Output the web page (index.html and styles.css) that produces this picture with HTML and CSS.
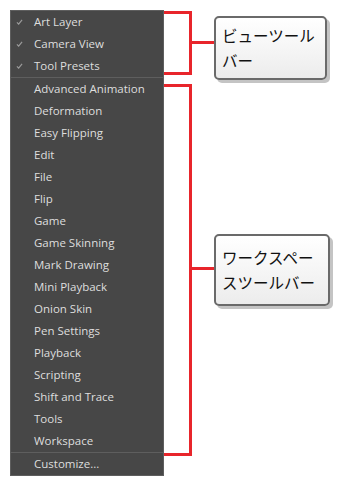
FILE: index.html
```html
<!DOCTYPE html>
<html lang="ja">
<head>
  <meta charset="UTF-8" />
  <title>Toolbars</title>
  <link rel="stylesheet" href="styles.css">
</head>
<body>
  <div class="figure">
    <div class="menu">
      <div class="item checked"><svg class="tick" viewBox="0 0 8 7"><path d="M1 4 L3 6 L7 1" /></svg>Art Layer</div>
      <div class="item checked"><svg class="tick" viewBox="0 0 8 7"><path d="M1 4 L3 6 L7 1" /></svg>Camera View</div>
      <div class="item checked"><svg class="tick" viewBox="0 0 8 7"><path d="M1 4 L3 6 L7 1" /></svg>Tool Presets</div>
      <div class="sep"></div>
      <div class="item">Advanced Animation</div>
      <div class="item">Deformation</div>
      <div class="item">Easy Flipping</div>
      <div class="item">Edit</div>
      <div class="item">File</div>
      <div class="item">Flip</div>
      <div class="item">Game</div>
      <div class="item">Game Skinning</div>
      <div class="item">Mark Drawing</div>
      <div class="item">Mini Playback</div>
      <div class="item">Onion Skin</div>
      <div class="item">Pen Settings</div>
      <div class="item">Playback</div>
      <div class="item">Scripting</div>
      <div class="item">Shift and Trace</div>
      <div class="item">Tools</div>
      <div class="item">Workspace</div>
      <div class="sep"></div>
      <div class="item">Customize...</div>
    </div>

    <div class="notes">
      <div class="group view">
        <div class="bracket"></div>
        <div class="link"></div>
        <div class="callout">ビューツール<br>バー</div>
      </div>
      <div class="group workspace">
        <div class="bracket"></div>
        <div class="link"></div>
        <div class="callout">ワークスペー<br>スツールバー</div>
      </div>
    </div>
  </div>
</body>
</html>
```

FILE: styles.css
```css
html, body {
  margin: 0;
  padding: 0;
  background: #fff;
}
body {
  padding: 10px;
}
.figure {
  display: flex;
  align-items: flex-start;
}
.menu {
  width: 152px;
  background: #474747;
  border: 1px solid #5e5e5e;
  font-family: "Open Sans", "Noto Sans", sans-serif;
  font-size: 11.5px;
  color: #dedede;
}
.item {
  position: relative;
  height: 22px;
  line-height: 22px;
  padding-left: 23px;
  white-space: nowrap;
}
.tick {
  position: absolute;
  left: 5px;
  top: 8px;
  width: 7px;
  height: 6px;
}
.tick path {
  fill: none;
  stroke: #9a9a9a;
  stroke-width: 1.4;
}
.sep {
  height: 1px;
  background: #5e5e5e;
}
.notes {
  display: flex;
  flex-direction: column;
  margin-top: 1px;
}
.group {
  display: flex;
  align-items: flex-start;
}
.bracket {
  box-sizing: border-box;
  width: 28px;
  border: 3px solid #e8252b;
  border-left: none;
}
.link {
  width: 22px;
  height: 3px;
  background: #e8252b;
}
.callout {
  box-sizing: border-box;
  padding: 5px 0 0 6px;
  border: 2px solid #6a6a6a;
  border-radius: 5px;
  background: linear-gradient(to bottom, #ffffff, #ececec);
  box-shadow: 3px 3px 0 #c4c4c4;
  font-family: "Noto Sans CJK JP", "Noto Sans", sans-serif;
  font-size: 15.5px;
  line-height: 25px;
  color: #111;
}
.view .bracket { height: 64px; }
.view .link { margin-top: 30px; }
.view .callout { margin-top: 5px; width: 113px; height: 64px; }
.workspace { margin-top: 4px; }
.workspace .bracket { height: 372px; }
.workspace .link { margin-top: 183px; }
.workspace .callout { margin-top: 150px; width: 116px; height: 72px; padding-top: 9px; }
```
